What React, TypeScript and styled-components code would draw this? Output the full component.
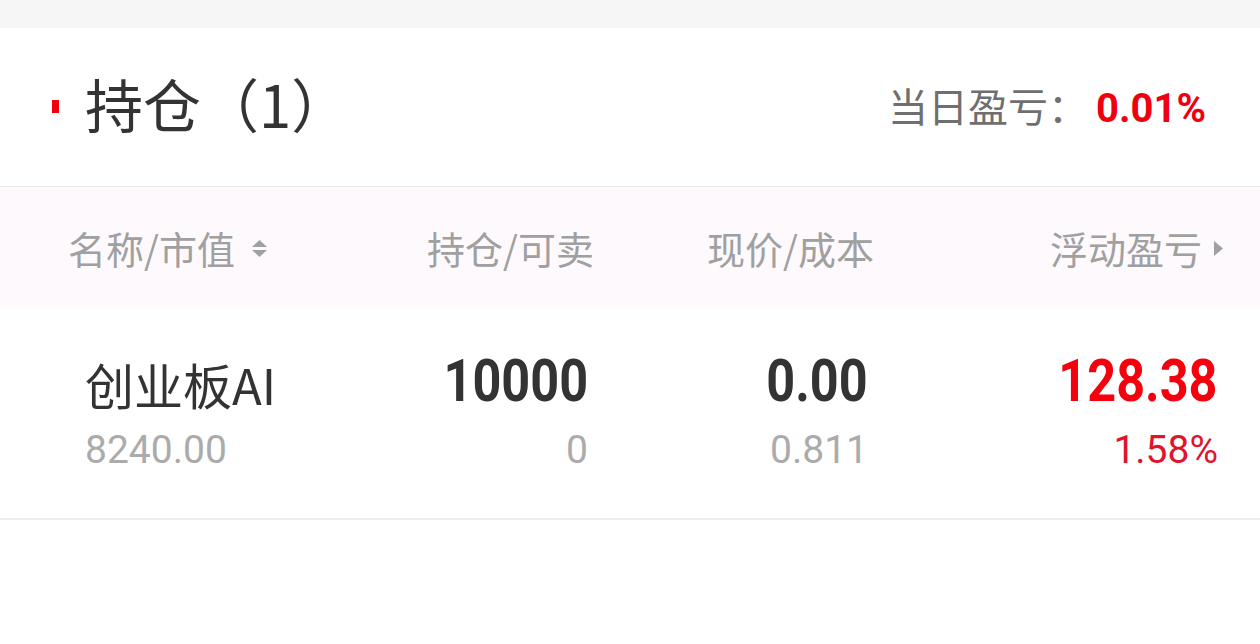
import React from 'react';
import styled, { createGlobalStyle } from 'styled-components';

const GlobalStyle = createGlobalStyle`
  html, body {
    margin: 0;
    padding: 0;
    background: #ffffff;
  }
  body {
    font-family: "Noto Sans CJK SC", "Noto Sans", sans-serif;
    color: #333333;
  }
`;

const CJK = '"Noto Sans CJK SC", "Noto Sans", sans-serif';
const NUM = 'Roboto, "Noto Sans", sans-serif';

const Page = styled.div`
  width: 1260px;
  min-height: 644px;
  background: #ffffff;
`;

const TopBand = styled.div`
  height: 28px;
  background: #f6f6f6;
`;

const SectionHeader = styled.div`
  height: 159px;
  display: flex;
  align-items: center;
  justify-content: space-between;
  padding: 0 54px 0 52px;
  border-bottom: 1px solid #ebebeb;
  box-sizing: border-box;
`;

const TitleWrap = styled.div`
  display: flex;
  align-items: center;
  gap: 26px;
  padding-bottom: 8px;
`;

const Marker = styled.span`
  display: block;
  width: 7px;
  height: 13px;
  background: #f0000f;
  margin-top: 7px;
`;

const Title = styled.h2`
  margin: 0;
  font-family: ${CJK};
  font-size: 58px;
  font-weight: 400;
  line-height: 1;
  color: #333333;
`;

const DayProfit = styled.div`
  display: flex;
  align-items: baseline;
  font-family: ${CJK};
  font-size: 40px;
  line-height: 1;
  color: #6f6f6f;
`;

const DayValue = styled.span`
  font-family: ${NUM};
  font-weight: 700;
  font-size: 40px;
  color: #f0000f;
  margin-left: 8px;
`;

const HeadRow = styled.div`
  display: grid;
  grid-template-columns: 252px 274px 280px 1fr;
  height: 120px;
  padding: 0 37px 0 68px;
  align-items: center;
  background: #fdf9fd;
`;

const HeadCell = styled.div<{ $align?: string }>`
  display: flex;
  align-items: center;
  justify-content: ${(p) => (p.$align === 'right' ? 'flex-end' : 'flex-start')};
  gap: ${(p) => (p.$align === 'right' ? 12 : 16)}px;
  font-family: ${CJK};
  font-size: 38px;
  line-height: 1;
  color: #a0a0a0;
  padding-top: 2px;
`;

const ItemRow = styled.div`
  display: grid;
  grid-template-columns: 235px 268px 280px 1fr;
  height: 213px;
  padding: 0 42px 0 85px;
  border-bottom: 2px solid #ededed;
  box-sizing: border-box;
  align-items: start;
`;

const Cell = styled.div<{ $align?: string }>`
  display: flex;
  flex-direction: column;
  align-items: ${(p) => (p.$align === 'right' ? 'flex-end' : 'flex-start')};
  padding-top: 44px;
`;

const Name = styled.div`
  font-family: ${CJK};
  font-size: 49px;
  line-height: 66px;
  color: #333333;
`;

/* the app uses a condensed numeric face; Roboto squeezed horizontally stands in for it */
const Main = styled.div<{ $red?: boolean }>`
  font-family: ${NUM};
  font-weight: 700;
  font-size: 60px;
  line-height: 60px;
  height: 60px;
  color: ${(p) => (p.$red ? '#f5000f' : '#333333')};
  transform: scaleX(0.84);
  transform-origin: right center;
`;

const Sub = styled.div<{ $red?: boolean; $gap: number }>`
  font-family: ${NUM};
  font-size: 39px;
  line-height: 40px;
  margin-top: ${(p) => p.$gap}px;
  color: ${(p) => (p.$red ? '#e0142c' : '#ababab')};
`;

const SortIcon = () => (
  <svg width="17" height="19" viewBox="0 0 17 19">
    <path d="M8.5 1 L16 8 L1 8 Z" fill="#a0a0a0" />
    <path d="M1 11 L16 11 L8.5 18 Z" fill="#a0a0a0" />
  </svg>
);

const ArrowRight = () => (
  <svg width="9" height="17" viewBox="0 0 9 17">
    <path d="M0 1 L9 8.5 L0 16 Z" fill="#a0a0a0" />
  </svg>
);

const position = {
  name: '创业板AI',
  marketValue: '8240.00',
  holding: '10000',
  sellable: '0',
  price: '0.00',
  cost: '0.811',
  profit: '128.38',
  profitRate: '1.58%',
};

export default function App() {
  return (
    <Page>
      <GlobalStyle />
      <TopBand />
      <SectionHeader>
        <TitleWrap>
          <Marker />
          <Title>持仓（1）</Title>
        </TitleWrap>
        <DayProfit>
          当日盈亏：<DayValue>0.01%</DayValue>
        </DayProfit>
      </SectionHeader>
      <HeadRow>
        <HeadCell>
          名称/市值
          <SortIcon />
        </HeadCell>
        <HeadCell $align="right">持仓/可卖</HeadCell>
        <HeadCell $align="right">现价/成本</HeadCell>
        <HeadCell $align="right">
          浮动盈亏
          <ArrowRight />
        </HeadCell>
      </HeadRow>
      <ItemRow>
        <Cell>
          <Name>{position.name}</Name>
          <Sub $gap={13}>{position.marketValue}</Sub>
        </Cell>
        <Cell $align="right">
          <Main>{position.holding}</Main>
          <Sub $gap={19}>{position.sellable}</Sub>
        </Cell>
        <Cell $align="right">
          <Main>{position.price}</Main>
          <Sub $gap={19}>{position.cost}</Sub>
        </Cell>
        <Cell $align="right">
          <Main $red>{position.profit}</Main>
          <Sub $red $gap={19}>{position.profitRate}</Sub>
        </Cell>
      </ItemRow>
    </Page>
  );
}
